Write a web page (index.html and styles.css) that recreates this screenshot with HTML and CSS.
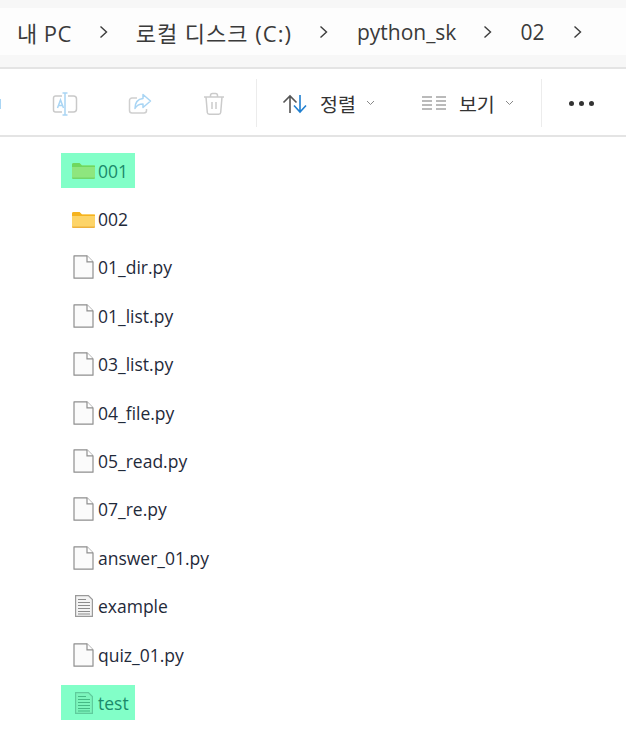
FILE: index.html
```html
<!DOCTYPE html>
<html lang="ko">
<head>
  <meta charset="UTF-8" />
  <meta name="viewport" content="width=device-width, initial-scale=1.0" />
  <title>02 - 파일 탐색기</title>
  <link rel="stylesheet" href="styles.css">
</head>
<body>

<svg class="defs" width="0" height="0">
  <symbol id="i-folder" viewBox="1 0 23 17">
    <path d="M1 2.500A1.500 1.500 0 0 1 2.500 1h6l2.500 2.500H22.500A1.500 1.500 0 0 1 24 5v10.500A1.500 1.500 0 0 1 22.500 17h-20A1.500 1.500 0 0 1 1 15.500z" fill="#fdd468"/>
    <path d="M1 2.500A1.500 1.500 0 0 1 2.500 1h6l2.500 2.500H24V5H1z" fill="#f5b31f"/>
    <path d="M1 15.500h23v.2A1.500 1.500 0 0 1 22.500 17h-20A1.500 1.500 0 0 1 1 15.700z" fill="#eeb13c"/>
  </symbol>
  <symbol id="i-folder-hl" viewBox="1 0 23 17">
    <path d="M1 2.500A1.500 1.500 0 0 1 2.500 1h6l2.500 2.500H22.500A1.500 1.500 0 0 1 24 5v10.500A1.500 1.500 0 0 1 22.500 17h-20A1.500 1.500 0 0 1 1 15.500z" fill="#8ee67e"/>
    <path d="M1 2.500A1.500 1.500 0 0 1 2.500 1h6l2.500 2.500H24V5H1z" fill="#6fd85e"/>
    <path d="M1 15.500h23v.2A1.500 1.500 0 0 1 22.500 17h-20A1.500 1.500 0 0 1 1 15.700z" fill="#72d869"/>
  </symbol>
  <symbol id="i-file" viewBox="0 0 21 24">
    <path d="M1 .8h13l6 6v16.400H1z" fill="#fbfbfb" stroke="#8f8f8f" stroke-width="1.200" stroke-linejoin="round"/>
    <path d="M14 .8v6h6" fill="#fff" stroke="#8f8f8f" stroke-width="1.200"/>
  </symbol>
  <symbol id="i-text" viewBox="0 0 18 22">
    <path d="M.6.6h12.800l4 4v16.800H.6z" fill="#f4f4f4" stroke="#9a9a9a" stroke-width="1.200"/>
    <path d="M3 4.500h8M3 7.500h12M3 10.500h12M3 13.500h12M3 16.500h12M3 19h12" stroke="#8c8c8c" stroke-width="1.200"/>
  </symbol>
  <symbol id="i-text-hl" viewBox="0 0 18 22">
    <path d="M.6.6h12.800l4 4v16.800H.6z" fill="#7cf5bc" stroke="#5fcb9c" stroke-width="1.200"/>
    <path d="M3 4.500h8M3 7.500h12M3 10.500h12M3 13.500h12M3 16.500h12M3 19h12" stroke="#45b985" stroke-width="1.200"/>
  </symbol>
</svg>

<div class="addressbar">
  <div class="crumbs">
    <span class="crumb crumb-pc">내 PC</span>
    <svg class="sep" viewBox="0 0 9 14"><path d="M1.500 1.500l6 5.500-6 5.500" /></svg>
    <span class="crumb crumb-disk">로컬 디스크 (C:)</span>
    <svg class="sep" viewBox="0 0 9 14"><path d="M1.500 1.500l6 5.500-6 5.500" /></svg>
    <span class="crumb crumb-py">python_sk</span>
    <svg class="sep" viewBox="0 0 9 14"><path d="M1.500 1.500l6 5.500-6 5.500" /></svg>
    <span class="crumb crumb-02">02</span>
    <svg class="sep" viewBox="0 0 9 14"><path d="M1.500 1.500l6 5.500-6 5.500" /></svg>
  </div>
</div>

<div class="toolbar">
  <div class="tool-cut"></div>
  <svg class="tool-icon icon-rename" viewBox="0 0 26 24" fill="none">
    <path d="M10 4H3.500A2 2 0 0 0 1.500 6v12a2 2 0 0 0 2 2H10M16 4h5.500a3 3 0 0 1 3 3v10a3 3 0 0 1-3 3H16" stroke="#c9c9c9" stroke-width="1.500"/>
    <path d="M13 1v22M10.500 1h5M10.500 23h5" stroke="#a9d5f4" stroke-width="1.500"/>
    <path d="M5.500 16l3-8 3 8M6.500 13.500h4" stroke="#a9d5f4" stroke-width="1.500"/>
  </svg>
  <svg class="tool-icon icon-share" viewBox="0 0 24 22" fill="none">
    <path d="M9 5H4a2.500 2.500 0 0 0-2.500 2.500v10A2.500 2.500 0 0 0 4 20h12a2.500 2.500 0 0 0 2.500-2.500V16" stroke="#cfcfcf" stroke-width="1.500"/>
    <path d="M15 1.500l7.500 6.500-7.500 6.500V11c-4 0-6.500 1.500-8 4.500 0-6 3-9.500 8-10z" stroke="#a9d5f4" stroke-width="1.500" stroke-linejoin="round"/>
  </svg>
  <svg class="tool-icon icon-trash" viewBox="0 0 22 24" fill="none" stroke="#cbcbcb" stroke-width="1.500">
    <path d="M1 5h20M7.500 5V3.500a2 2 0 0 1 2-2h3a2 2 0 0 1 2 2V5M3 5l1.300 15.500a2 2 0 0 0 2 1.800h9.400a2 2 0 0 0 2-1.800L19 5M9 10v7M13 10v7"/>
  </svg>
  <div class="tool-divider divider-a"></div>
  <div class="tool-btn btn-sort">
    <svg class="icon-sort" viewBox="0 0 26 20" fill="none" stroke-width="1.600">
      <path d="M8 19V2M1.500 8.500L8 2l6.500 6.500" stroke="#555"/>
      <path d="M18 1v17M12 11.500l6 6.500 6-6.500" stroke="#1f7fd0"/>
    </svg>
    <span class="tool-label">정렬</span>
    <svg class="caret" viewBox="0 0 9 6"><path d="M1 1l3.500 3.500L8 1"/></svg>
  </div>
  <div class="tool-btn btn-view">
    <svg class="icon-view" viewBox="0 0 26 14" fill="none" stroke="#777" stroke-width="1.200">
      <path d="M1 1h10M1 5h10M1 9h10M1 13h10M15 1h10M15 5h10M15 9h10M15 13h10"/>
    </svg>
    <span class="tool-label">보기</span>
    <svg class="caret" viewBox="0 0 9 6"><path d="M1 1l3.500 3.500L8 1"/></svg>
  </div>
  <div class="tool-divider divider-b"></div>
  <div class="tool-more"><i></i><i></i><i></i></div>
</div>

<ul class="files">
  <li class="file-row"><span class="file hl"><svg class="ico ico-folder"><use href="#i-folder-hl"/></svg>001</span></li>
  <li class="file-row"><span class="file"><svg class="ico ico-folder"><use href="#i-folder"/></svg>002</span></li>
  <li class="file-row"><span class="file"><svg class="ico ico-doc"><use href="#i-file"/></svg>01_dir.py</span></li>
  <li class="file-row"><span class="file"><svg class="ico ico-doc"><use href="#i-file"/></svg>01_list.py</span></li>
  <li class="file-row"><span class="file"><svg class="ico ico-doc"><use href="#i-file"/></svg>03_list.py</span></li>
  <li class="file-row"><span class="file"><svg class="ico ico-doc"><use href="#i-file"/></svg>04_file.py</span></li>
  <li class="file-row"><span class="file"><svg class="ico ico-doc"><use href="#i-file"/></svg>05_read.py</span></li>
  <li class="file-row"><span class="file"><svg class="ico ico-doc"><use href="#i-file"/></svg>07_re.py</span></li>
  <li class="file-row"><span class="file"><svg class="ico ico-doc"><use href="#i-file"/></svg>answer_01.py</span></li>
  <li class="file-row"><span class="file"><svg class="ico ico-txt"><use href="#i-text"/></svg>example</span></li>
  <li class="file-row"><span class="file"><svg class="ico ico-doc"><use href="#i-file"/></svg>quiz_01.py</span></li>
  <li class="file-row"><span class="file hl hl-test"><svg class="ico ico-txt"><use href="#i-text-hl"/></svg>test</span></li>
</ul>

</body>
</html>
```

FILE: styles.css
```css
html, body {
  margin: 0;
  padding: 0;
  height: 729px;
  overflow: hidden;
  background: #ffffff;
  font-family: "Open Sans", "Noto Sans CJK KR", sans-serif;
  color: #1f1f1f;
}

.defs {
  position: absolute;
}

/* address bar */
.addressbar {
  box-sizing: border-box;
  height: 69px;
  padding-top: 8px;
  background: #f7f7f7;
  border-bottom: 2px solid #e4e4e4;
}

.crumbs {
  display: flex;
  align-items: center;
  height: 47px;
  background: #fdfdfd;
  color: #3a3a3a;
  font-size: 21px;
}

.crumb {
  white-space: nowrap;
}

.crumb-pc {
  margin-left: 17px;
  font-size: 22px;
  letter-spacing: 0.4px;
}

.crumb-disk {
  font-size: 22px;
  letter-spacing: 1px;
}

.sep {
  width: 9px;
  height: 14px;
  flex: none;
  fill: none;
  stroke: #3c3c3c;
  stroke-width: 1.400;
}

.crumb-pc + .sep { margin: 0 28px 0 27px; }
.crumb-disk + .sep { margin: 0 29px 0 27px; }
.crumb-py + .sep { margin: 0 28px 0 27px; }
.crumb-02 + .sep { margin-left: 29px; }

/* toolbar */
.toolbar {
  box-sizing: border-box;
  display: flex;
  align-items: center;
  height: 68px;
  padding-top: 2px;
  border-bottom: 2px solid #e4e4e4;
  font-size: 19.500px;
  color: #333;
}

.tool-cut {
  width: 1px;
  height: 10px;
  margin-top: 2px;
  background: #a9d5f4;
}

.tool-icon {
  flex: none;
  margin-top: 2px;
}

.icon-rename { width: 26px; height: 24px; margin-left: 51px; }
.icon-share { width: 24px; height: 22px; margin-left: 50px; }
.icon-trash { width: 22px; height: 24px; margin-left: 51px; }

.tool-divider {
  width: 1px;
  height: 48px;
  flex: none;
  background: #ececec;
}

.divider-a { margin-left: 31px; }
.divider-b { margin-left: 27px; }

.tool-btn {
  display: flex;
  align-items: center;
  flex: none;
}

.btn-sort { margin-left: 25px; }
.btn-view { margin-left: 46px; }

.icon-sort { width: 26px; height: 20px; margin: 1px 12px 0 0; }
.icon-view { width: 26px; height: 14px; margin-right: 12px; }

.caret {
  width: 9px;
  height: 6px;
  margin-left: 10px;
  fill: none;
  stroke: #888;
  stroke-width: 1;
}

.tool-more {
  display: flex;
  gap: 5px;
  margin-left: 27px;
}

.tool-more i {
  width: 5px;
  height: 5px;
  border-radius: 50%;
  background: #333;
}

/* file list */
.files {
  list-style: none;
  margin: 0;
  padding: 9.500px 0 0 61px;
  font-size: 17.500px;
}

.file-row {
  display: flex;
  align-items: center;
  height: 48.400px;
}

.file {
  display: flex;
  align-items: center;
  height: 35px;
  padding: 0 7px 0 11px;
  color: #1f2a3a;
  white-space: nowrap;
}

.hl {
  background: #82ffc8;
  color: #1b8a6a;
}

.hl-test {
  padding-right: 6px;
  width: 57px;
}

.ico {
  flex: none;
}

.ico-folder {
  width: 23px;
  height: 17px;
  margin: 0 3px 0 0;
}

.ico-doc {
  width: 21px;
  height: 24px;
  margin: 0 4px 0 1px;
}

.ico-txt {
  width: 18px;
  height: 22px;
  margin: 0 5px 0 3px;
}
```
